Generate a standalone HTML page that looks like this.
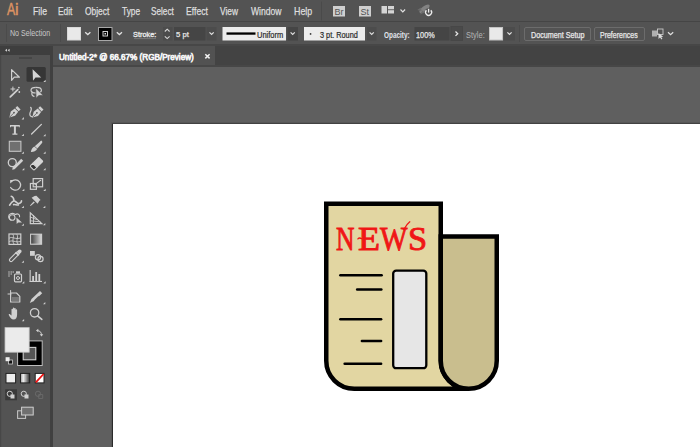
<!DOCTYPE html>
<html><head><meta charset="utf-8">
<style>
*{margin:0;padding:0;box-sizing:border-box}
html,body{width:700px;height:447px;overflow:hidden;background:#535353;font-family:"Liberation Sans",sans-serif}
.b{position:absolute}
.tx{position:absolute;white-space:nowrap;line-height:1;transform-origin:0 0}
svg{position:absolute;left:0;top:0}
</style></head><body>
<!-- bars -->
<div class="b" style="left:0;top:0;width:700px;height:21px;background:#535353"></div>
<div class="b" style="left:0;top:21px;width:700px;height:1px;background:#454545"></div>
<div class="b" style="left:0;top:22px;width:700px;height:22px;background:#535353"></div>
<div class="b" style="left:0;top:44px;width:700px;height:2px;background:#474747"></div>
<div class="b" style="left:53px;top:46px;width:647px;height:19px;background:#434343"></div>
<div class="b" style="left:53px;top:46px;width:162px;height:19px;background:#525252"></div>
<!-- canvas -->
<div class="b" style="left:53px;top:65px;width:647px;height:382px;background:#5f5f5f"></div>
<div class="b" style="left:53px;top:65px;width:647px;height:2px;background:#474747"></div>
<div class="b" style="left:111px;top:122px;width:589px;height:325px;background:#575757"></div>
<div class="b" style="left:112px;top:123px;width:588px;height:324px;background:#424242"></div>
<div class="b" style="left:112px;top:124px;width:1px;height:323px;background:#2a2a2a"></div>
<div class="b" style="left:113px;top:124px;width:587px;height:323px;background:#ffffff"></div>
<!-- toolbar -->
<div class="b" style="left:0;top:46px;width:50px;height:401px;background:#535353"></div>
<div class="b" style="left:50px;top:46px;width:3px;height:401px;background:#404040"></div>
<div class="b" style="left:0;top:46px;width:50px;height:9px;background:#3e3e3e"></div>
<div class="b" style="left:19px;top:57px;width:13px;height:2px;background:#464646"></div>

<svg width="700" height="447" viewBox="0 0 700 447">
 <g fill="none" stroke-linecap="round" stroke-linejoin="round">
 <!-- menu separator -->
 <line x1="321.5" y1="2" x2="321.5" y2="20" stroke="#4a4a4a"/>
 </g>
 <!-- Br / St -->
 <rect x="333" y="6" width="12" height="10.5" fill="#cfcfcf"/>
 <rect x="359" y="6" width="12" height="10.5" fill="#cfcfcf"/>
 <text x="334.6" y="14.6" font-family="Liberation Sans" font-size="9" fill="#555">Br</text>
 <text x="360.6" y="14.6" font-family="Liberation Sans" font-size="9" fill="#505050">St</text>
 <!-- workspace icon -->
 <rect x="381.5" y="6" width="5.5" height="7.5" fill="#d4d4d4"/>
 <rect x="388" y="6" width="6" height="3.3" fill="#d4d4d4"/>
 <rect x="388" y="10.2" width="6" height="3.3" fill="#d4d4d4"/>
 <path d="M400.5,9.5 L402.8,11.8 L405.1,9.5" fill="none" stroke="#e0e0e0" stroke-width="1.2"/>
 <!-- gpu icon -->
 <ellipse cx="424.5" cy="8.8" rx="6.2" ry="2.6" transform="rotate(-38 424.5 8.8)" fill="#828282"/>
 <path d="M417.2,10 L421,7.5 L421.5,11 Z M420,14.5 L422.5,10.6 L424.6,12.6 Z" fill="#6c6c6c"/>
 <circle cx="428.6" cy="12.6" r="4.3" fill="#535353"/>
 <path d="M426.4,10.3 A3,3 0 1 0 430.8,10.3" fill="none" stroke="#ececec" stroke-width="1.3"/>
 <line x1="428.6" y1="8.8" x2="428.6" y2="12.6" stroke="#ececec" stroke-width="1.3"/>

 <!-- ctrl bar -->
 <line x1="6.5" y1="24" x2="6.5" y2="42" stroke="#4b4b4b"/>
 <line x1="60.5" y1="24" x2="60.5" y2="42" stroke="#4b4b4b"/>
 <rect x="67.5" y="27.5" width="13" height="12.5" fill="#e9e9e9" stroke="#d8d8d8"/>
 <path d="M85.2,32.3 L87.8,34.6 L90.4,32.3" stroke="#e0e0e0" stroke-width="1.3" fill="none"/>
 <rect x="98.5" y="27.5" width="13.5" height="13" fill="#000" stroke="#a8a8a8"/>
 <rect x="103" y="31.5" width="4.5" height="4.5" fill="none" stroke="#e0e0e0" stroke-width="0.9"/>
 <rect x="104.5" y="33" width="1.5" height="1.5" fill="#e0e0e0"/>
 <path d="M116.8,32.3 L119.4,34.6 L122,32.3" stroke="#e0e0e0" stroke-width="1.3" fill="none"/>
 <line x1="134.5" y1="38.6" x2="156.5" y2="38.6" stroke="#b8b8b8" stroke-width="0.7" stroke-dasharray="1,1"/>
 <rect x="163" y="27" width="9.5" height="13.5" fill="#4c4c4c"/>
 <path d="M164.8,31.5 L167.2,29.2 L169.6,31.5 M164.8,36.3 L167.2,38.6 L169.6,36.3" stroke="#d8d8d8" stroke-width="1.1" fill="none"/>
 <rect x="174" y="27" width="31.5" height="13.5" fill="#454545"/>
 <rect x="206.5" y="27" width="10" height="13.5" fill="#4c4c4c"/>
 <path d="M209.5,32.3 L211.6,34.4 L213.7,32.3" stroke="#e0e0e0" stroke-width="1.2" fill="none"/>
 <rect x="222.5" y="27" width="63.5" height="13.5" fill="#ececec"/>
 <rect x="226.5" y="32.4" width="29" height="2.3" fill="#000"/>
 <rect x="287.5" y="27" width="10.5" height="13.5" fill="#454545"/>
 <path d="M290.6,32.3 L292.7,34.4 L294.8,32.3" stroke="#e0e0e0" stroke-width="1.2" fill="none"/>
 <rect x="304" y="27" width="61" height="13.5" fill="#ececec"/>
 <rect x="309.8" y="33.2" width="1.5" height="1.5" fill="#222"/>
 <rect x="367" y="27" width="9.5" height="13.5" fill="#4c4c4c"/>
 <path d="M369.6,32.3 L371.7,34.4 L373.8,32.3" stroke="#e0e0e0" stroke-width="1.2" fill="none"/>
 
 <rect x="414.5" y="27" width="35" height="13.5" fill="#454545"/>
 <rect x="451" y="26.5" width="11.5" height="14" fill="#4a4a4a" stroke="#474747"/>
 <path d="M455.5,31.5 L457.7,33.7 L455.5,35.9" stroke="#e8e8e8" stroke-width="1.3" fill="none"/>
 <rect x="489.5" y="27.5" width="13" height="12.5" fill="#e9e9e9" stroke="#c4c4c4"/>
 <rect x="504" y="27" width="11" height="13.5" fill="#4c4c4c"/>
 <path d="M507.4,32.3 L509.5,34.4 L511.6,32.3" stroke="#e0e0e0" stroke-width="1.2" fill="none"/>
 <line x1="519.5" y1="25" x2="519.5" y2="42" stroke="#4b4b4b"/>
 <rect x="524.5" y="27.5" width="66" height="13" rx="1.5" fill="#535353" stroke="#6c6c6c"/>
 <rect x="594.5" y="27.5" width="50" height="13" rx="1.5" fill="#535353" stroke="#6c6c6c"/>
 <!-- arrange icon -->
 <rect x="652" y="30.5" width="5" height="6" fill="#b0b0b0"/>
 <rect x="657.5" y="29" width="5.5" height="5.5" fill="none" stroke="#c8c8c8" stroke-width="0.9"/>
 <path d="M658.5,33 L658.5,39 L660,37.6 L661.5,39.5 L662.4,38.8 L661.2,37 L663.2,36.8 Z" fill="#dcdcdc"/>
 <path d="M668,32.3 L670.6,34.7 L673.2,32.3" stroke="#e0e0e0" stroke-width="1.2" fill="none"/>

 <!-- tab close -->
 <path d="M205.3,54.3 L209.6,58.4 M209.6,54.3 L205.3,58.4" stroke="#f0f0f0" stroke-width="1.5"/>

 <!-- toolbar header arrows -->
 <path d="M7,48.7 L5,50.2 L7,51.7 Z M9.6,48.7 L7.6,50.2 L9.6,51.7 Z" fill="#d0d0d0"/>

  <!-- toolbar left dark line -->
 <rect x="0" y="55" width="1.2" height="392" fill="#474747"/>
 <g fill="none" stroke="#cfcfcf" stroke-width="1.2" stroke-linejoin="round" stroke-linecap="round">
  <!-- selection -->
  <path d="M11.6,69.6 L11.6,80.3 L14.3,77.2 L19.4,77.2 Z"/>
 </g>
 <!-- direct selection highlight -->
 <rect x="26.5" y="67" width="19.3" height="14.8" rx="1.5" fill="#363636"/>
 <path d="M32.6,69.3 L33,80.8 L35.5,77.4 L41.2,77.4 Z" fill="#d4d4d4"/>
 <g fill="#d0d0d0">
  <!-- group triangles -->
  <path d="M43.3,82 L45.6,82 L45.6,79.7 Z"/>
  <path d="M21.6,119.4 L23.9,119.4 L23.9,117.1 Z"/>
  <path d="M21.6,136 L23.9,136 L23.9,133.7 Z"/>
  <path d="M43.3,136.2 L45.6,136.2 L45.6,133.9 Z"/>
  <path d="M21.6,153.8 L23.9,153.8 L23.9,151.5 Z"/>
  <path d="M43.3,153.8 L45.6,153.8 L45.6,151.5 Z"/>
  <path d="M22,170.3 L24.3,170.3 L24.3,168 Z"/>
  <path d="M43.3,170.3 L45.6,170.3 L45.6,168 Z"/>
  <path d="M22,191 L24.3,191 L24.3,188.7 Z"/>
  <path d="M43.3,191 L45.6,191 L45.6,188.7 Z"/>
  <path d="M21.6,208 L23.9,208 L23.9,205.7 Z"/>
  <path d="M43,208 L45.3,208 L45.3,205.7 Z"/>
  <path d="M21.6,225.8 L23.9,225.8 L23.9,223.5 Z"/>
  <path d="M43,225.3 L45.3,225.3 L45.3,223 Z"/>
  <path d="M21.6,262.8 L23.9,262.8 L23.9,260.5 Z"/>
  <path d="M22,283.6 L24.3,283.6 L24.3,281.3 Z"/>
  <path d="M43.3,283.6 L45.6,283.6 L45.6,281.3 Z"/>
  <path d="M43,304.2 L45.3,304.2 L45.3,301.9 Z"/>
  <path d="M21.8,321.3 L24.1,321.3 L24.1,319 Z"/>
 </g>
 <g fill="none" stroke="#cfcfcf" stroke-width="1.2" stroke-linejoin="round" stroke-linecap="round">
  <!-- magic wand -->
  <line x1="10.3" y1="96.8" x2="17.8" y2="89.6" stroke-width="1.8"/>
  <path d="M12.9,87 V91 M10.9,89 H14.9" stroke-width="1"/>
  <!-- lasso -->
  <ellipse cx="36.2" cy="90.2" rx="5.2" ry="2.8"/>
  <path d="M32.4,92.2 C31.2,93.8 32,95.8 34,96.4"/>
 </g>
 <g fill="#d0d0d0">
  <circle cx="18.9" cy="87.6" r="0.9"/>
  <circle cx="19.3" cy="92" r="0.9"/>
  <path d="M35.7,88 L36.1,98.3 L38.7,95.6 L43.2,95.4 Z" stroke="#535353" stroke-width="0.7"/>
  <!-- pen -->
  <path d="M9.3,117.4 L10.8,111.6 L14.8,108.4 L18.2,111.8 L15.1,115.8 Z"/>
  <path d="M15.4,107.9 L17.2,106 L20.6,109.4 L18.7,111.2 Z"/>
  <!-- curvature pen -->
  <path d="M32.2,117.6 L33.7,111.8 L37.7,108.6 L41.1,112 L38,116 Z"/>
  <path d="M38.3,108.1 L40.1,106.2 L43.5,109.6 L41.6,111.4 Z"/>
  <!-- type T -->
  <path d="M10,124.9 H19.8 V127.3 H18.9 V126.4 H15.9 V133.4 H17.4 V134.8 H12.4 V133.4 H13.9 V126.4 H10.9 V127.3 H10 Z"/>
 </g>
 <path d="M9.8,117 L13.6,113.2 M32.7,117.2 L36.5,113.4" stroke="#535353" stroke-width="0.8"/>
 <circle cx="14" cy="112.6" r="0.9" fill="#535353"/><circle cx="36.9" cy="112.8" r="0.9" fill="#535353"/>
 <g fill="none" stroke="#cfcfcf" stroke-width="1.2" stroke-linejoin="round" stroke-linecap="round">
  <path d="M30.6,107.3 C32.6,108.8 30.5,111 29.9,113.5 C29.5,115.5 30.6,116.8 32.5,116.8"/>
  <!-- line -->
  <line x1="31.6" y1="134" x2="41.4" y2="124.4" stroke-width="1.3"/>
  <!-- rect -->
  <rect x="9.3" y="141.3" width="11.6" height="10" fill="#707070" stroke="#c4c4c4" stroke-width="1.1" stroke-linejoin="miter"/>
  <!-- shaper -->
  <circle cx="12.3" cy="162.6" r="4" stroke-width="1.3"/>
 </g>
 <g fill="#d0d0d0">
  <!-- brush -->
  <path d="M41.2,140.4 C42.4,141 42.6,142 42,143 L37.4,148.6 L34.8,146.2 Z"/>
  <path d="M34.4,146.4 L37.2,149 C36,151 33.5,152 30.9,151.9 C31.2,149.4 32.3,147.5 34.4,146.4 Z"/>
  <!-- shaper pencil -->
  <path d="M21.2,158.7 L23.2,160.7 L14.6,169.3 L12.2,169.8 L12.7,167.4 Z"/>
  <!-- eraser -->
 </g>
 <g transform="translate(36.6,163.6) rotate(-45)">
  <path d="M-2.6,-3.4 H5.4 C6.1,-3.4 6.6,-2.9 6.6,-2.2 V2.2 C6.6,2.9 6.1,3.4 5.4,3.4 H-2.6 Z" fill="#d4d4d4"/>
  <path d="M-2.6,-2.9 H-5.4 C-6.2,-2.9 -6.6,-2.4 -6.6,-1.6 V1.6 C-6.6,2.4 -6.2,2.9 -5.4,2.9 H-2.6 Z" fill="#333" stroke="#d4d4d4" stroke-width="1"/>
 </g>
 <g fill="none" stroke="#cfcfcf" stroke-width="1.2" stroke-linejoin="round" stroke-linecap="round">
  <!-- rotate -->
  <path d="M11.2,181.6 C13.5,179.3 17.5,179.3 19.5,181.8 C21.4,184.2 20.8,188 18,189.5 C15.4,190.8 12,190 10.6,187.5" stroke-width="1.3"/>
  <!-- scale -->
  <rect x="30.4" y="183.5" width="6" height="5.8" stroke-linejoin="miter"/>
  <rect x="33.2" y="178.6" width="9.4" height="8.2" stroke-linejoin="miter"/>
  <line x1="35" y1="184.6" x2="40.4" y2="180.4"/>
  <!-- warp -->
  <path d="M9.6,205.2 C11,203 12.5,200.5 14.5,201 C16.5,201.5 17,204 19,203.5 C20.5,203.2 21.5,202 21.5,200.8 M11.2,196.3 C12.8,196.5 13.6,198 14,200.5 M13.6,204.6 C15.2,204.2 16.4,205.2 18.4,205" stroke-width="1.6"/>
 </g>
 <g fill="#d0d0d0">
  <path d="M10.2,180 L13.8,180 L10.2,183.6 Z"/>
  <path d="M39.6,180 L41.2,180 L41.2,181.6 Z"/>
  <!-- puppet pin -->
  <path d="M36.4,195.8 L40.6,200 L39.4,200.8 L37.6,203.8 L31.6,197.8 L34.6,196 Z"/>
  <path d="M33.6,201.4 L34.8,202.6 L30.6,206 L30,205.4 Z"/>
 </g>
 <g fill="none" stroke="#cfcfcf" stroke-width="1.1" stroke-linejoin="round" stroke-linecap="round">
  <!-- shape builder -->
  <path d="M11,220 C8,219 7.8,215 10.5,213.8 C13,212.6 14.5,214 15.5,214.5 C17.5,213 20,214.5 19.6,216.8"/>
  <circle cx="12.2" cy="217.5" r="2.8"/>
  <!-- perspective grid -->
  <path d="M30.3,212.8 V223.6 H41.8 Z" stroke-width="1.2" stroke-linejoin="miter"/>
  <path d="M30.3,217 L36.5,219.5 M30.3,220.8 L40,221.8 M33.5,215.5 V223.6" stroke-width="0.9"/>
  <!-- mesh -->
  <rect x="9" y="234" width="11.8" height="10.4" stroke-width="1.2" stroke-linejoin="miter"/>
  <path d="M9.5,238 C12.5,236 15,240 20.5,238 M9.5,241.5 C12.5,239.5 15,243 20.5,241.5 M13,234.5 C15,237 11,240 14,244 M17,234.5 C19,238 15,241 18,244" stroke-width="0.9"/>
 </g>
 <path d="M16.4,217.6 L16.7,224 L18.2,222.4 L22,222.4 Z" fill="#d0d0d0"/>
 <defs><linearGradient id="gr" x1="0" y1="0" x2="1" y2="0"><stop offset="0" stop-color="#3a3a3a"/><stop offset="1" stop-color="#dcdcdc"/></linearGradient>
 <linearGradient id="gr2" x1="0" y1="0" x2="1" y2="0"><stop offset="0" stop-color="#9a9a9a"/><stop offset="0.3" stop-color="#f2f2f2"/><stop offset="1" stop-color="#2e2e2e"/></linearGradient></defs>
 <rect x="30.6" y="234.2" width="11" height="10" fill="url(#gr)" stroke="#cfcfcf" stroke-width="1.1"/>
 <g fill="none" stroke="#cfcfcf" stroke-width="1.2" stroke-linejoin="round" stroke-linecap="round">
  <!-- eyedropper -->
  <g transform="translate(9.6,261.4) rotate(-45)"><path d="M0.5,0 C0.5,-1 1,-1.5 2,-1.6 H10.4 V1.6 H2 C1,1.5 0.5,1 0.5,0 Z" stroke-width="1.1"/></g>
  <!-- blend -->
  <circle cx="38" cy="257.2" r="2.6"/>
  <circle cx="40.5" cy="259" r="2.6"/>
  <!-- symbol sprayer bottle -->
  <rect x="14.5" y="274" width="7" height="7.8" rx="1"/>
  <circle cx="18" cy="278" r="1.5" stroke-width="1"/>
  <!-- artboard -->
  <path d="M10.6,293 H16.5 L19.8,296.3 V302 H10.6 Z" stroke-width="1.2"/>
  <path d="M8,294 H11 M10.6,290.5 V293" stroke-width="1"/>
  <!-- zoom -->
  <circle cx="34.6" cy="312.8" r="4.2" stroke-width="1.3"/>
  <line x1="37.6" y1="315.8" x2="41.8" y2="319.4" stroke-width="1.6"/>
 </g>
 <g fill="#d0d0d0">
  <g transform="translate(9.6,261.4) rotate(-45)"><rect x="10.2" y="-2.3" width="1.6" height="4.6"/><path d="M11.8,-1.9 H14 C15.4,-1.9 16.2,-1 16.2,0 C16.2,1 15.4,1.9 14,1.9 H11.8 Z"/></g>
  <rect x="30" y="251" width="4.8" height="4.8"/>
  <!-- sprayer dots -->
  <rect x="8.4" y="271.4" width="1.2" height="1.2"/><rect x="10.6" y="271.4" width="1.2" height="1.2"/><rect x="12.6" y="271.4" width="1.2" height="1.2"/>
  <rect x="8.4" y="273.4" width="1.2" height="1.2"/><rect x="10.6" y="273.4" width="1.2" height="1.2"/>
  <rect x="8.4" y="275.4" width="1.2" height="1.2"/>
  <rect x="16" y="271.3" width="4" height="2.2"/>
  <!-- graph -->
  <rect x="29.6" y="270" width="1.1" height="12"/>
  <rect x="29.6" y="280.9" width="12.4" height="1.1"/>
  <rect x="32.2" y="276" width="1.8" height="5"/>
  <rect x="35.3" y="272" width="1.8" height="9"/>
  <rect x="38.4" y="274" width="1.8" height="7"/>
  <!-- slice knife -->
  <path d="M40,291 L42.2,293.2 L34,301 L29.8,303 L31.5,299 Z"/>
  <!-- hand -->
  <path d="M11.5,313 V309.5 C11.5,308.6 12.9,308.6 12.9,309.5 V312 V308.3 C12.9,307.4 14.3,307.4 14.3,308.3 V312 V308.6 C14.3,307.7 15.7,307.7 15.7,308.6 V312.5 V310 C15.7,309.1 17.1,309.1 17.1,310 V314.5 C17.1,317.5 16,319.6 13.5,319.6 C11.5,319.6 10.5,318 9.6,316.5 L8.8,315 C8.4,314.2 9.5,313.6 10.2,314.4 L11.5,315.6 Z"/>
 </g>
 <path d="M34,300.5 L38.5,296 L39,296.6 L35,301 Z" fill="#535353"/>
 <rect x="12" y="297" width="7" height="4.3" fill="#777"/>

 <!-- fill/stroke -->
 <rect x="17.6" y="340.9" width="24.6" height="24.6" fill="#000" stroke="#bdbdbd" stroke-width="1"/>
 <rect x="23.2" y="347.4" width="12.6" height="12.4" fill="#555" stroke="#cfcfcf" stroke-width="1.1"/>
 <rect x="5" y="327.6" width="24.2" height="24.6" fill="#ebebeb" stroke="#bfbfbf" stroke-width="0.8"/>
 <!-- swap -->
 <g fill="none" stroke="#d0d0d0" stroke-width="1" stroke-linecap="round">
  <path d="M37.2,330.6 C40,330.6 41.5,332 41.5,335"/>
 </g>
 <path d="M36,330.5 L38.3,328.8 L38.3,332.2 Z M41.5,336.6 L39.7,334.2 L43.3,334.2 Z" fill="#d0d0d0"/>
 <!-- default -->
 <rect x="8.5" y="360" width="4" height="4" fill="#111" stroke="#ccc" stroke-width="0.8"/>
 <rect x="5.6" y="357.2" width="4" height="4" fill="#f0f0f0"/>
 <!-- color/gradient/none -->
 <rect x="6" y="373.4" width="9.6" height="9.5" fill="#eeeeee" stroke="#222" stroke-width="1"/>
 <rect x="20.5" y="373.4" width="9.2" height="9.5" fill="url(#gr2)" stroke="#222" stroke-width="1"/>
 <rect x="35.2" y="373.4" width="8.8" height="9.5" fill="#fff" stroke="#222" stroke-width="1"/>
 <line x1="35.8" y1="382.4" x2="43.6" y2="374" stroke="#ee1111" stroke-width="1.8"/>
 <!-- draw modes -->
 <rect x="5.2" y="389.3" width="11.8" height="11" fill="#3a3a3a"/>
 <g fill="none" stroke="#d0d0d0" stroke-width="1">
  <circle cx="9.8" cy="393.8" r="2.6"/>
  <circle cx="23.8" cy="393.8" r="2.6"/>
  <circle cx="38" cy="393.8" r="2.6" stroke="#6a6a6a"/>
 </g>
 <path d="M10.5,394.5 h4 v4 h-4 Z M24.5,394.5 h4 v4 h-4 Z" fill="#d0d0d0"/>
 <path d="M38.7,394.5 h4 v4 h-4 Z" fill="none" stroke="#6a6a6a" stroke-width="0.9"/>
 <!-- screen mode -->
 <rect x="17.6" y="410.8" width="8" height="7.6" fill="#5c5c5c" stroke="#c8c8c8" stroke-width="1"/>
 <rect x="21.6" y="407.2" width="11.6" height="7.8" fill="#707070" stroke="#d0d0d0" stroke-width="1"/>


 <!-- newspaper -->
 <g stroke="#000" stroke-width="4.5" stroke-linejoin="miter">
  <path d="M326.25,203.75 H440.75 V360.85 A27.9,27.9 0 0 0 468.65,388.75 H354.25 A28,28 0 0 1 326.25,360.75 Z" fill="#e2d6a2"/>
  <path d="M440.75,236.5 H496.75 V360.85 A28,28 0 0 1 440.75,360.85 Z" fill="#c9be8e"/>
 </g>
 <rect x="393.2" y="270.6" width="33.1" height="97.6" rx="3" fill="#e6e6e6" stroke="#000" stroke-width="2.3"/>
 <g stroke="#000" stroke-width="2.6" stroke-linecap="round">
  <line x1="340.4" y1="275.3" x2="381.6" y2="275.3"/>
  <line x1="357.2" y1="289.5" x2="381.3" y2="289.5"/>
  <line x1="340.4" y1="319.3" x2="381.1" y2="319.3"/>
  <line x1="361.9" y1="341" x2="381.1" y2="341"/>
  <line x1="344.7" y1="363.7" x2="381.1" y2="363.7"/>
 </g>
</svg>
<div class="tx" style="left:6.7px;top:1px;font-size:17.15px;color:#dc9262;font-family:'Liberation Sans',sans-serif;transform:scaleX(0.718);-webkit-text-stroke:0.5px #dc9262">A</div>
<div class="tx" style="left:15.35px;top:1px;font-size:17.15px;color:#dc9262;font-family:'Liberation Sans',sans-serif;transform:scaleX(0.95);-webkit-text-stroke:0.5px #dc9262">i</div>
<div class="tx" style="left:32.56px;top:7px;font-size:10.32px;color:#dedede;font-family:'Liberation Sans',sans-serif;transform:scaleX(0.844);-webkit-text-stroke:0.25px #dedede">File</div>
<div class="tx" style="left:57.79px;top:7px;font-size:10.32px;color:#dedede;font-family:'Liberation Sans',sans-serif;transform:scaleX(0.812);-webkit-text-stroke:0.25px #dedede">Edit</div>
<div class="tx" style="left:84.9px;top:7px;font-size:10.32px;color:#dedede;font-family:'Liberation Sans',sans-serif;transform:scaleX(0.817);-webkit-text-stroke:0.25px #dedede">Object</div>
<div class="tx" style="left:121.7px;top:7px;font-size:10.32px;color:#dedede;font-family:'Liberation Sans',sans-serif;transform:scaleX(0.809);-webkit-text-stroke:0.25px #dedede">Type</div>
<div class="tx" style="left:151.2px;top:7px;font-size:10.32px;color:#dedede;font-family:'Liberation Sans',sans-serif;transform:scaleX(0.796);-webkit-text-stroke:0.25px #dedede">Select</div>
<div class="tx" style="left:186.36px;top:7px;font-size:10.32px;color:#dedede;font-family:'Liberation Sans',sans-serif;transform:scaleX(0.836);-webkit-text-stroke:0.25px #dedede">Effect</div>
<div class="tx" style="left:220.2px;top:7px;font-size:10.32px;color:#dedede;font-family:'Liberation Sans',sans-serif;transform:scaleX(0.809);-webkit-text-stroke:0.25px #dedede">View</div>
<div class="tx" style="left:250.9px;top:7px;font-size:10.32px;color:#dedede;font-family:'Liberation Sans',sans-serif;transform:scaleX(0.832);-webkit-text-stroke:0.25px #dedede">Window</div>
<div class="tx" style="left:293.74px;top:7px;font-size:10.32px;color:#dedede;font-family:'Liberation Sans',sans-serif;transform:scaleX(0.86);-webkit-text-stroke:0.25px #dedede">Help</div>
<div class="tx" style="left:9.74px;top:30px;font-size:8.28px;color:#c8c8c8;font-family:'Liberation Sans',sans-serif;transform:scaleX(0.857);-webkit-text-stroke:0.01px #c8c8c8">No Selection</div>
<div class="tx" style="left:133.38px;top:31px;font-size:7.99px;color:#e8e8e8;font-family:'Liberation Sans',sans-serif;transform:scaleX(0.921);-webkit-text-stroke:0.35px #e8e8e8">Stroke:</div>
<div class="tx" style="left:176.1px;top:31px;font-size:7.99px;color:#e6e6e6;font-family:'Liberation Sans',sans-serif;transform:scaleX(0.962);-webkit-text-stroke:0.25px #e6e6e6">5 pt</div>
<div class="tx" style="left:256.78px;top:32px;font-size:8.14px;color:#2a2a2a;font-family:'Liberation Sans',sans-serif;transform:scaleX(0.922);-webkit-text-stroke:0.2px #2a2a2a">Uniform</div>
<div class="tx" style="left:320.2px;top:32px;font-size:8.14px;color:#2a2a2a;font-family:'Liberation Sans',sans-serif;transform:scaleX(0.9);-webkit-text-stroke:0.2px #2a2a2a">3 pt. Round</div>
<div class="tx" style="left:383.7px;top:32px;font-size:8.14px;color:#e2e6ee;font-family:'Liberation Sans',sans-serif;font-weight:bold;transform:scaleX(0.791)">Opacity:</div>
<div class="tx" style="left:416.0px;top:32px;font-size:8.14px;color:#e6e6e6;font-family:'Liberation Sans',sans-serif;transform:scaleX(0.9);-webkit-text-stroke:0.25px #e6e6e6">100%</div>
<div class="tx" style="left:465.58px;top:32px;font-size:8.14px;color:#b4b4b4;font-family:'Liberation Sans',sans-serif;transform:scaleX(0.921);-webkit-text-stroke:0.01px #b4b4b4">Style:</div>
<div class="tx" style="left:530.82px;top:32px;font-size:8.14px;color:#e8e8e8;font-family:'Liberation Sans',sans-serif;transform:scaleX(0.883);-webkit-text-stroke:0.25px #e8e8e8">Document Setup</div>
<div class="tx" style="left:600.14px;top:32px;font-size:8.14px;color:#e8e8e8;font-family:'Liberation Sans',sans-serif;transform:scaleX(0.86);-webkit-text-stroke:0.25px #e8e8e8">Preferences</div>
<div class="tx" style="left:58.51px;top:53px;font-size:9.16px;color:#f4f4f4;font-family:'Liberation Sans',sans-serif;transform:scaleX(0.888);-webkit-text-stroke:0.75px #f4f4f4">Untitled-2* @ 66.67% (RGB/Preview)</div>
<div class="tx" style="left:336.04px;top:222px;font-size:33.79px;color:#f01616;font-family:'Liberation Serif',serif;font-weight:normal;transform:scaleX(0.757);-webkit-text-stroke:0.9px #f01616">N</div>
<div class="tx" style="left:358.43px;top:222px;font-size:33.79px;color:#f01616;font-family:'Liberation Serif',serif;font-weight:normal;transform:scaleX(1.067);-webkit-text-stroke:0.9px #f01616">E</div>
<div class="tx" style="left:380.0px;top:222px;font-size:33.79px;color:#f01616;font-family:'Liberation Serif',serif;font-weight:normal;transform:scaleX(0.859);-webkit-text-stroke:0.9px #f01616">W</div>
<div class="tx" style="left:408.26px;top:222px;font-size:33.79px;color:#f01616;font-family:'Liberation Serif',serif;font-weight:normal;transform:scaleX(1.02);-webkit-text-stroke:0.9px #f01616">S</div>
<svg width="700" height="447" viewBox="0 0 700 447" style="pointer-events:none">
 <path d="M403.8,229.5 C405.5,226.5 407.5,223.5 409.8,221.8" fill="none" stroke="#f01616" stroke-width="1.3" stroke-linecap="round"/>
 <path d="M357.9,238.9 C359,237.6 360.2,237.8 361.5,238.6" fill="none" stroke="#f01616" stroke-width="1.3" stroke-linecap="round"/>
</svg>
</body></html>
